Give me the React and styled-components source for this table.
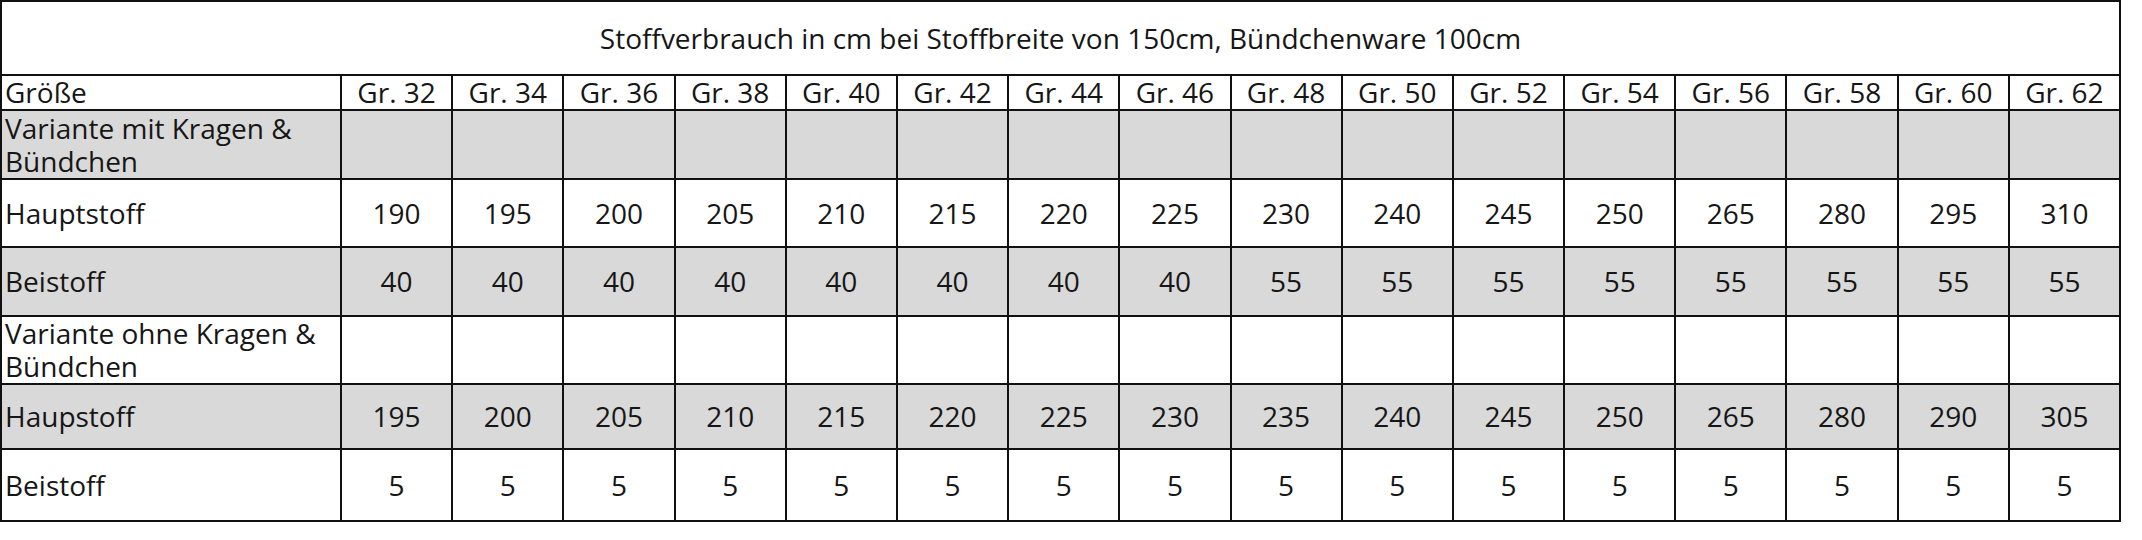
import React from 'react';
import styled, { createGlobalStyle } from 'styled-components';

const GlobalStyle = createGlobalStyle`
    html, body {
        margin: 0;
        padding: 0;
        background: #ffffff;
    }
    body {
        font-family: "Open Sans", "Noto Sans", sans-serif;
        color: #161616;
    }
`;

const Table = styled.table`
    border-collapse: collapse;
    table-layout: fixed;
    width: 2121px;
    font-size: 28px;
    line-height: 33px;
    td {
        border: 2px solid #111111;
        padding: 0 3px;
        white-space: nowrap;
    }
`;

const TitleCell = styled.td`
    height: 72px;
    text-align: center;
    vertical-align: middle;
`;

const Row = styled.tr`
    height: ${(p) => p.$height}px;
    background: ${(p) => (p.$shaded ? '#d9d9d9' : '#ffffff')};
`;

const LabelCell = styled.td`
    text-align: left;
    vertical-align: middle;
    && {
        white-space: normal;
    }
`;

const ValueCell = styled.td`
    text-align: center;
    vertical-align: middle;
`;

const sizes = [32, 34, 36, 38, 40, 42, 44, 46, 48, 50, 52, 54, 56, 58, 60, 62];

const rows = [
    { label: 'Variante mit Kragen & Bündchen', shaded: true, height: 69, values: null },
    { label: 'Hauptstoff', height: 68, values: [190, 195, 200, 205, 210, 215, 220, 225, 230, 240, 245, 250, 265, 280, 295, 310] },
    { label: 'Beistoff', shaded: true, height: 69, values: [40, 40, 40, 40, 40, 40, 40, 40, 55, 55, 55, 55, 55, 55, 55, 55] },
    { label: 'Variante ohne Kragen & Bündchen', height: 66, values: null },
    { label: 'Haupstoff', shaded: true, height: 65, values: [195, 200, 205, 210, 215, 220, 225, 230, 235, 240, 245, 250, 265, 280, 290, 305] },
    { label: 'Beistoff', height: 72, values: [5, 5, 5, 5, 5, 5, 5, 5, 5, 5, 5, 5, 5, 5, 5, 5] },
];

const App = () => {
    return (
        <>
            <GlobalStyle />
            <Table>
                <colgroup>
                    <col style={{ width: 340 }} />
                    {sizes.map((s) => <col key={s} />)}
                </colgroup>
                <tbody>
                    <tr>
                        <TitleCell colSpan={17}>
                            Stoffverbrauch in cm bei Stoffbreite von 150cm, Bündchenware 100cm
                        </TitleCell>
                    </tr>
                    <Row $height={35}>
                        <LabelCell>Größe</LabelCell>
                        {sizes.map((s) => <ValueCell key={s}>Gr. {s}</ValueCell>)}
                    </Row>
                    {rows.map((row, i) => (
                        <Row key={i} $shaded={row.shaded} $height={row.height}>
                            <LabelCell>{row.label}</LabelCell>
                            {sizes.map((s, j) => (
                                <ValueCell key={s}>{row.values ? row.values[j] : ''}</ValueCell>
                            ))}
                        </Row>
                    ))}
                </tbody>
            </Table>
        </>
    );
};

export default App;
